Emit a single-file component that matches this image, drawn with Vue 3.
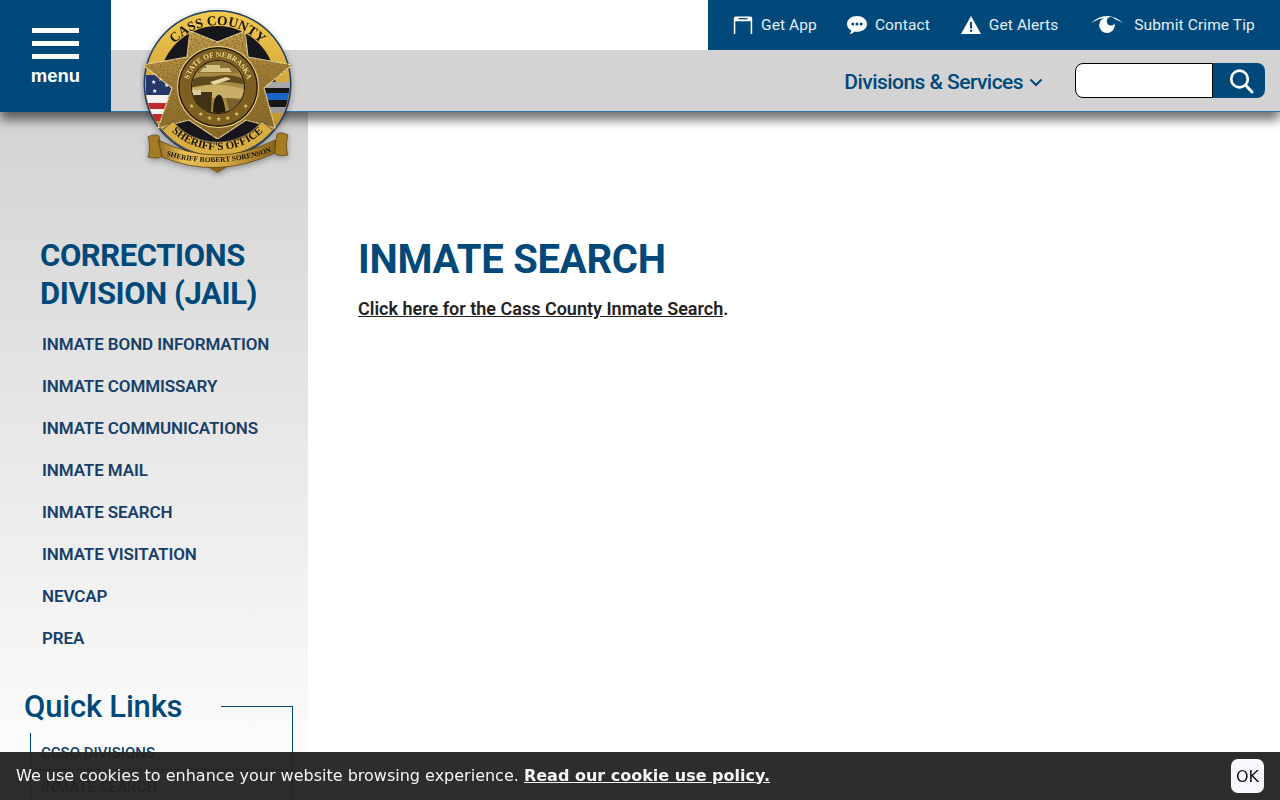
<template>
  <div class="page">
    <header class="header">
      <button class="menu-btn">
        <span class="bars"><i></i><i></i><i></i></span>
        <span class="menu-label">menu</span>
      </button>
      <div class="header-right">
        <div class="top-row">
          <nav class="top-links">
            <a class="top-link">
              <svg width="20" height="18" viewBox="0 0 20 18"><path d="M.8 18V2.500C.8 1.200 1.600.5 2.800.5h14.400c1.200 0 2 .7 2 2V18h-1.500V5.200H2.300V18z" fill="#fff"/><rect x="5.500" y="2" width="9" height="1.300" fill="#00497a"/></svg>
              Get App
            </a>
            <a class="top-link contact-link">
              <svg width="20" height="20" viewBox="0 0 20 20"><path d="M10 1c5.500 0 10 3.400 10 7.900s-4.500 7.900-10 7.900c-.9 0-1.700-.1-2.500-.3C6.300 17.700 4.500 19 2.600 19c.9-1 1.500-2.300 1.600-3.700C1.700 13.900 0 11.600 0 8.900 0 4.400 4.500 1 10 1z" fill="#fff"/><circle cx="5.800" cy="9" r="1.500" fill="#00497a"/><circle cx="10" cy="9" r="1.500" fill="#00497a"/><circle cx="14.200" cy="9" r="1.500" fill="#00497a"/></svg>
              Contact
            </a>
            <a class="top-link alert-link">
              <svg width="20" height="18" viewBox="0 0 20 18"><path d="M10 0 L20 18 H0z" fill="#fff"/><rect x="9" y="6" width="2" height="6.500" fill="#00497a"/><rect x="9" y="13.800" width="2" height="2" fill="#00497a"/></svg>
              Get Alerts
            </a>
            <a class="top-link eye-link">
              <svg width="32" height="18" viewBox="0 0 32 18"><path d="M0 7C5 2.500 10.500 0 16 0s11 2.500 16 7c-5-3-10.500-5.300-16-5.300S5 4 0 7z" fill="#fff"/><path d="M16 1.500a7.800 7.800 0 1 1 0 15.600 7.800 7.800 0 0 1 0-15.600z" fill="#fff"/><circle cx="20" cy="5.200" r="4.200" fill="#00497a"/></svg>
              Submit Crime Tip
            </a>
          </nav>
        </div>
        <div class="bottom-row">
          <a class="divisions">
            Divisions &amp; Services
            <svg width="14" height="9" viewBox="0 0 14 9"><path d="M1.500 1.500 7 7l5.500-5.500" fill="none" stroke="#00497a" stroke-width="2"/></svg>
          </a>
          <form class="search" @submit.prevent>
            <input class="search-input" type="text" />
            <button class="search-btn">
              <svg width="26" height="26" viewBox="0 0 26 26"><circle cx="11.500" cy="11" r="8.300" fill="none" stroke="#fff" stroke-width="2.700"/><path d="M17.500 17 24 24" stroke="#fff" stroke-width="3" stroke-linecap="round"/></svg>
            </button>
          </form>
        </div>
      </div>

      <svg class="badge" width="160" height="172" viewBox="0 0 160 172">
        <defs>
          <linearGradient id="gold" x1="0" y1="0" x2="0.200" y2="1">
            <stop offset="0" stop-color="#d3ab55"/>
            <stop offset="0.500" stop-color="#a98336"/>
            <stop offset="1" stop-color="#8d6a28"/>
          </linearGradient>
          <linearGradient id="ring" x1="0" y1="0" x2="0" y2="1">
            <stop offset="0" stop-color="#f3c94e"/>
            <stop offset="0.700" stop-color="#c79a33"/>
            <stop offset="1" stop-color="#a87c22"/>
          </linearGradient>
          <linearGradient id="ribbon" x1="0" y1="0" x2="1" y2="0">
            <stop offset="0" stop-color="#8f6a1e"/>
            <stop offset="0.220" stop-color="#e8c057"/>
            <stop offset="0.600" stop-color="#d2a53d"/>
            <stop offset="1" stop-color="#8b651d"/>
          </linearGradient>
          <filter id="engrave" x="0" y="0" width="100%" height="100%">
            <feTurbulence type="fractalNoise" baseFrequency="0.55" numOctaves="2" seed="4" result="n"/>
            <feColorMatrix in="n" type="matrix" values="0 0 0 0 0.200  0 0 0 0 0.130  0 0 0 0 0.030  1.800 0 0 0 -0.550"/>
            <feComposite in2="SourceAlpha" operator="in" result="t"/>
            <feMerge><feMergeNode in="SourceGraphic"/><feMergeNode in="t"/></feMerge>
          </filter>
          <filter id="soft" x="-20%" y="-20%" width="140%" height="140%">
            <feDropShadow dx="0" dy="2" stdDeviation="3" flood-color="#000" flood-opacity="0.350"/>
          </filter>
          <clipPath id="disc"><circle cx="77.500" cy="76" r="72"/></clipPath>
          <clipPath id="inner"><circle cx="78" cy="79" r="26"/></clipPath>
          <path id="arcTop" d="M18.500 76A59 59 0 0 1 136.500 76"/>
          <path id="arcSeal" d="M48 79A30 30 0 0 1 108 79"/>
          <path id="arcOffice" d="M11.500 76A66 66 0 0 0 143.500 76"/>
          <path id="arcName" d="M24 147Q77 163 134 143"/>
        </defs>
        <g filter="url(#soft)">
          <!-- outer disc, flag and thin blue line panels -->
          <circle cx="77.500" cy="76" r="74" fill="#1b3a63"/>
          <circle cx="77.500" cy="76" r="72.500" fill="url(#ring)"/>
          <circle cx="77.500" cy="76" r="58" fill="#15161a"/>
          <g clip-path="url(#disc)">
            <rect x="6" y="67" width="28" height="20" fill="#27376b"/>
            <rect x="6" y="87" width="28" height="8" fill="#f3f0ee"/>
            <rect x="6" y="95" width="28" height="6" fill="#c0292f"/>
            <rect x="6" y="101" width="28" height="5" fill="#f3f0ee"/>
            <rect x="6" y="106" width="28" height="7" fill="#c0292f"/>
            <rect x="122" y="74" width="28" height="6" fill="#a7a7a7"/>
            <rect x="122" y="80" width="28" height="5" fill="#141414"/>
            <rect x="122" y="85" width="28" height="7" fill="#1a63c6"/>
            <rect x="122" y="92" width="28" height="7" fill="#141414"/>
            <rect x="122" y="99" width="28" height="6" fill="#9a9a9a"/>
          </g>
          <g fill="#fff" font-size="6">
            <text x="11" y="76">★</text><text x="18" y="73">★</text><text x="24" y="79">★</text><text x="12" y="85">★</text>
          </g>
          <text class="seal-type" font-size="13.500" fill="#17120a"><textPath href="#arcTop" startOffset="50%" text-anchor="middle">CASS COUNTY</textPath></text>

          <!-- seven point star -->
          <polygon filter="url(#engrave)" points="3,57 47,49 50,23 77.500,34 105,23 108,49 152,57 124,80 135,120 106,112 77.500,131 49,112 18,120 32,80" fill="url(#gold)" stroke="#f4e3a4" stroke-width="1.100" stroke-linejoin="round"/>

          <!-- state seal -->
          <circle cx="78" cy="79" r="41" fill="#f0d98c"/>
          <circle cx="78" cy="79" r="40" fill="#2a1e08"/>
          <circle cx="78" cy="79" r="38.500" fill="#7e5f20"/>
          <circle cx="78" cy="79" r="27" fill="#20170a"/>
          <g clip-path="url(#inner)">
            <rect x="50" y="52" width="56" height="54" fill="#a98a45"/>
            <rect x="50" y="52" width="56" height="13" fill="#8a7138"/>
            <path d="M63 60h26l3 4H60zM66 57h14v3H66z" fill="#d6c384"/>
            <path d="M50 73c10-7 18-3 27-5s18-1 29 4v5c-12-3-20-4-28-2s-19 2-28 5z" fill="#5f4a1c"/>
            <path d="M50 80c14-3 24-4 33-3s15 2 23 5v8H50z" fill="#c9ae66"/>
            <path d="M50 84h22l-1 22H50z" fill="#3f3012"/>
            <path d="M52 82h9v5h-9z" fill="#d9cda0"/>
            <path d="M73 106c0-10 1-17 5-19s6 6 8 19z" fill="#241a08"/>
            <path d="M86 90c7 0 13 1 20 4v12H90z" fill="#7a6029"/>
            <path d="M70 74l16-5 5 2-17 6z" fill="#e4d6a0"/>
          </g>
          <text class="seal-type" font-size="7.500" fill="#efd993"><textPath href="#arcSeal" startOffset="50%" text-anchor="middle">STATE OF NEBRASKA</textPath></text>
          <g fill="#e6cb74" font-size="6" text-anchor="middle">
            <text x="51" y="100">★</text><text x="60" y="108">★</text><text x="69" y="112">★</text><text x="78" y="113">★</text><text x="87" y="112">★</text><text x="96" y="108">★</text><text x="105" y="100">★</text>
          </g>

          <!-- Sheriff's Office band and ribbon -->
          <path d="M22.300 122.300A72 72 0 0 0 132.700 122.300L121.900 113.300A58 58 0 0 1 33.100 113.300z" fill="#d9ae42" stroke="#23355a" stroke-width="0.700"/>
          <path d="M8 129c4-2 8-3 11-1l3 20c-4 3-9 2-14 1 2-6 2-14 0-20zM148 127c-4-2-8-3-11-1l-3 19c4 3 9 3 14 2-2-6-2-14 0-20z" fill="#a57c24" stroke="#4f3a10" stroke-width="0.700"/>
          <path d="M62 156 77.500 165 93 156z" fill="#8a6420"/>
          <path d="M18 132Q77 162 135 132l0 13Q77 172 22 149z" fill="url(#ribbon)" stroke="#5a4212" stroke-width="0.800"/>
          <text class="seal-type" font-size="11" fill="#1a1206"><textPath href="#arcOffice" startOffset="50%" text-anchor="middle">SHERIFF'S OFFICE</textPath></text>
          <text class="seal-type" font-size="7.400" fill="#1a1206"><textPath href="#arcName" startOffset="50%" text-anchor="middle">SHERIFF ROBERT SORENSON</textPath></text>
        </g>
      </svg>
    </header>

    <div class="content">
      <aside class="sidebar">
        <h2 class="side-title">CORRECTIONS<br />DIVISION (JAIL)</h2>
        <ul class="side-nav">
          <li v-for="item in sideItems" :key="item"><a>{{ item }}</a></li>
        </ul>
        <div class="quick">
          <div class="quick-head">
            <h3>Quick Links</h3>
            <span class="quick-line"></span>
          </div>
          <ul class="quick-list">
            <li v-for="item in quickItems" :key="item">{{ item }}</li>
          </ul>
        </div>
      </aside>
      <main class="main">
        <h1>INMATE SEARCH</h1>
        <p><a class="inmate-link">Click here for the Cass County Inmate Search</a>.</p>
      </main>
    </div>

    <div class="cookie">
      <span class="cookie-text">We use cookies to enhance your website browsing experience. <a>Read our cookie use policy.</a></span>
      <button class="ok">OK</button>
    </div>
  </div>
</template>

<script setup>
const sideItems = [
  'INMATE BOND INFORMATION',
  'INMATE COMMISSARY',
  'INMATE COMMUNICATIONS',
  'INMATE MAIL',
  'INMATE SEARCH',
  'INMATE VISITATION',
  'NEVCAP',
  'PREA'
]
const quickItems = ['CCSO DIVISIONS', 'INMATE SEARCH']
</script>

<style>
html, body {
  height: 800px;
  overflow: hidden;
}
</style>

<style scoped>
.page {
  height: 800px;
  overflow: hidden;
  background: #fff;
  font-family: Roboto, "Liberation Sans", sans-serif;
}

.header {
  position: relative;
  z-index: 2;
  display: flex;
  height: 112px;
  box-shadow: 0 8px 10px rgba(0, 0, 0, 0.55);
}
.menu-btn {
  width: 111px;
  height: 112px;
  flex: none;
  padding: 28px 0 0;
  border: 0;
  background: #00497a;
  color: #fff;
  display: flex;
  flex-direction: column;
  align-items: center;
}
.bars {
  display: flex;
  flex-direction: column;
  gap: 8px;
}
.bars i {
  display: block;
  width: 47px;
  height: 5px;
  background: #fff;
}
.menu-label {
  margin-top: 5px;
  font-family: "Liberation Sans", sans-serif;
  font-size: 18.500px;
  font-weight: 700;
  line-height: 24px;
}
.header-right {
  flex: 1;
  display: flex;
  flex-direction: column;
  background: #fff;
}
.top-row {
  height: 50px;
  display: flex;
  justify-content: flex-end;
}
.top-links {
  width: 572px;
  box-sizing: border-box;
  padding-left: 25px;
  background: #00497a;
  display: flex;
  align-items: center;
}
.top-link {
  display: flex;
  align-items: center;
  gap: 8px;
  margin-right: 30px;
  color: #e6edf2;
  font-size: 15.500px;
  letter-spacing: 0.100px;
  white-space: nowrap;
}
.contact-link {
  margin-right: 31px;
}
.alert-link {
  margin-right: 33px;
}
.eye-link {
  margin-right: 0;
  gap: 11px;
}
.bottom-row {
  flex: 1;
  display: flex;
  align-items: center;
  justify-content: flex-end;
  padding-right: 15px;
  background: #d3d3d3;
  border-bottom: 1px solid #2b7aa8;
}
.divisions {
  display: flex;
  align-items: center;
  gap: 6px;
  margin: 3px 32px 0 0;
  color: #00497a;
  font-size: 21px;
  font-weight: 500;
  letter-spacing: -0.550px;
}
.search {
  display: flex;
  height: 35px;
}
.search-input {
  width: 138px;
  box-sizing: border-box;
  height: 35px;
  padding: 0 6px;
  border: 1px solid #000;
  border-radius: 8px 0 0 8px;
  background: #fff;
  outline: none;
}
.search-btn {
  width: 52px;
  height: 35px;
  padding: 0 0 0 3px;
  border: 0;
  border-radius: 0 8px 8px 0;
  background: #00497a;
  display: flex;
  align-items: center;
  justify-content: center;
}
.badge {
  position: absolute;
  left: 140px;
  top: 8px;
}

.content {
  display: flex;
  height: 688px;
}
.sidebar {
  width: 308px;
  flex: none;
  box-sizing: border-box;
  padding-top: 125px;
  background: linear-gradient(to bottom, #d3d3d3 0, #ffffff 688px);
}
.side-title {
  margin: 0 0 0 40px;
  color: #00497a;
  font-size: 31px;
  font-weight: 700;
  line-height: 38px;
  letter-spacing: -0.400px;
}
.side-nav {
  list-style: none;
  margin: 10px 0 0;
  padding: 0 0 0 42px;
}
.side-nav li {
  height: 42px;
  line-height: 42px;
  color: #173f68;
  font-size: 17px;
  font-weight: 600;
  letter-spacing: -0.100px;
  white-space: nowrap;
}
.quick {
  margin-top: 27px;
  padding-left: 24px;
}
.quick-head {
  display: flex;
  align-items: flex-start;
  height: 47px;
}
.quick-head h3 {
  margin: 1px 0 0;
  width: 197px;
  flex: none;
  color: #00497a;
  font-size: 31px;
  font-weight: 500;
  line-height: 40px;
  letter-spacing: -0.200px;
}
.quick-line {
  box-sizing: border-box;
  width: 72px;
  height: 27px;
  margin-top: 20px;
  border-top: 1px solid #00497a;
  border-right: 1px solid #00497a;
}
.quick-list {
  list-style: none;
  box-sizing: border-box;
  margin: 0 0 0 6px;
  padding: 3px 0 0;
  width: 263px;
  border-left: 1px solid #00497a;
  border-right: 1px solid #00497a;
}
.quick-list li {
  padding: 8px 0 7px 10px;
  color: #173f68;
  font-size: 15px;
  line-height: 18px;
  font-weight: 500;
  border-bottom: 1px solid #00497a;
}

.main {
  flex: 1;
  padding: 126px 0 0 50px;
}
.main h1 {
  margin: 0;
  color: #00497a;
  font-size: 40px;
  font-weight: 700;
  line-height: 44px;
  letter-spacing: -0.250px;
}
.main p {
  margin: 14px 0 0;
  color: #222;
  font-size: 18px;
  font-weight: 600;
  line-height: 26px;
}
.inmate-link {
  text-decoration: underline;
}

.cookie {
  position: fixed;
  z-index: 5;
  left: 0;
  right: 0;
  bottom: 0;
  height: 48px;
  display: flex;
  align-items: center;
  justify-content: space-between;
  box-sizing: border-box;
  padding: 0 16px;
  background: rgba(34, 34, 34, 0.95);
  color: #f4f4f4;
  font-family: "DejaVu Sans", sans-serif;
  font-size: 16px;
}
.cookie-text {
  margin-bottom: 2px;
}
.cookie a {
  font-weight: 700;
  text-decoration: underline;
}
.ok {
  width: 33px;
  height: 34px;
  padding: 0;
  border: 0;
  border-radius: 7px;
  background: #f6f8fb;
  color: #111;
  font-family: "DejaVu Sans", sans-serif;
  font-size: 16px;
}
.seal-type {
  font-family: "Liberation Serif", serif;
  font-weight: 700;
}
</style>
